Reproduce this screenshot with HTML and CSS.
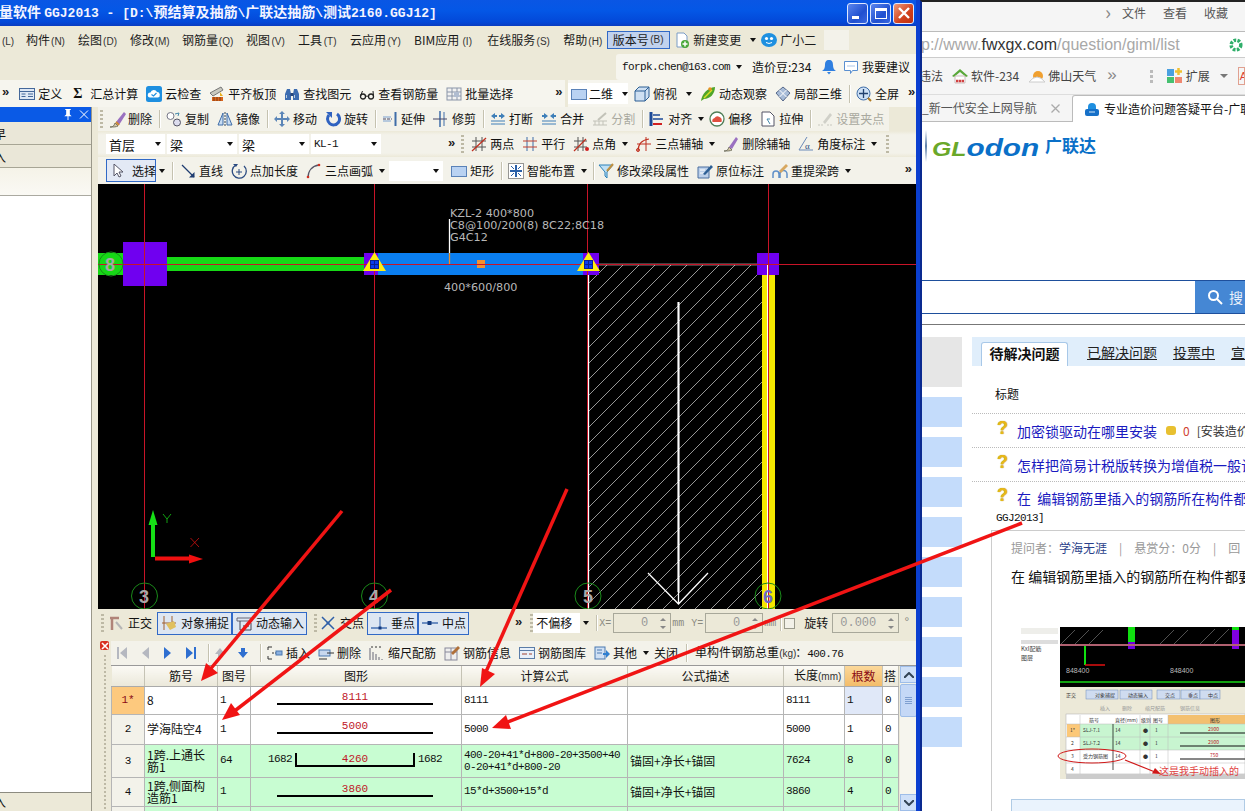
FILE: index.html
```html
<!DOCTYPE html>
<html lang="zh">
<head>
<meta charset="utf-8">
<title>GGJ2013</title>
<link rel="stylesheet" href="styles.css">
</head>
<body>
<div class="desk">
<section class="app">
  <header class="title">
    <h1 class="title-text">量软件 <span class="lat">GGJ2013 - [D:\</span>预结算及抽筋<span class="lat">\</span>广联达抽筋<span class="lat">\</span>测试<span class="lat">2160.GGJ12]</span></h1>
    <div class="win-btns">
      <span class="wb"><i class="wb-min"></i></span>
      <span class="wb"><i class="wb-max"></i></span>
      <span class="wb wb-x"><svg viewBox="0 0 12 12" width="12" height="12"><path d="M1 1l10 10M11 1L1 11" stroke="#fff" stroke-width="2.4"/></svg></span>
    </div>
  </header>

  <nav class="menu">
    <span class="m-item m-first"><span class="k">(L)</span></span>
    <span class="m-item">构件<span class="k">(N)</span></span>
    <span class="m-item">绘图<span class="k">(D)</span></span>
    <span class="m-item">修改<span class="k">(M)</span></span>
    <span class="m-item">钢筋量<span class="k">(Q)</span></span>
    <span class="m-item">视图<span class="k">(V)</span></span>
    <span class="m-item">工具<span class="k">(T)</span></span>
    <span class="m-item">云应用<span class="k">(Y)</span></span>
    <span class="m-item">BIM应用<span class="k">(I)</span></span>
    <span class="m-item">在线服务<span class="k">(S)</span></span>
    <span class="m-item">帮助<span class="k">(H)</span></span>
    <span class="m-ver">版本号<span class="k">(B)</span></span>
    <span class="it m-new"><svg class="i" viewBox="0 0 16 16"><path d="M3 1h7l3 3v11H3z" fill="#fff" stroke="#7a9cc6"/><circle cx="11" cy="12" r="4" fill="#4aa83a"/><path d="M11 9.500v5M8.500 12h5" stroke="#fff" stroke-width="1.500"/></svg>新建变更<i class="dd"></i></span>
    <span class="it m-bot"><svg class="i" viewBox="0 0 16 16"><ellipse cx="8" cy="8" rx="8" ry="7" fill="#1e90e0"/><circle cx="5.500" cy="6.500" r="1.600" fill="#fff"/><circle cx="10.500" cy="6.500" r="1.600" fill="#fff"/><path d="M5 10.500q3 2 6 0" stroke="#fff" fill="none"/></svg>广小二</span>
    <span class="m-blank"></span>
  </nav>

  <div class="infobar">
    <div class="info-strip">
      <span class="mono email">forpk.chen@163.com</span><i class="dd dd-e"></i>
      <span class="bean">造价豆:234</span>
      <svg class="i bell" viewBox="0 0 16 16"><path d="M8 1c3 0 4 2 4 5s1 5 3 6H1c2-1 3-3 3-6s1-5 4-5z" fill="#2f7fe0"/><path d="M6 13h4l-2 2.500z" fill="#2f7fe0"/></svg>
      <span class="it advise"><svg class="i" viewBox="0 0 16 16"><path d="M1.500 2.500h13v9h-5l-2 3v-3h-6z" fill="#fff" stroke="#5a8fd0"/><path d="M4.500 7h7" stroke="#5a8fd0" stroke-dasharray="1 1"/></svg>我要建议</span>
    </div>
  </div>

  <div class="bar3">
    <div class="strip s-left">
      <span class="chev">»</span>
      <span class="it"><svg class="i" viewBox="0 0 16 16"><rect x=".5" y="2.500" width="15" height="11" fill="#dfe8f5" stroke="#45689a"/><path d="M.5 5.500h15M9 8h5M9 10.500h5M2.500 8h4M2.500 10.500h4" stroke="#45689a"/></svg>定义</span>
      <span class="it"><span class="sigma">Σ</span>汇总计算</span>
      <span class="it"><svg class="i" viewBox="0 0 16 16"><rect width="16" height="16" rx="2.500" fill="#1e8fe0"/><path d="M4 11.500a2.500 2.500 0 0 1 .5-5 3.500 3.500 0 0 1 6.500-.5 2.800 2.800 0 0 1 .8 5.500z" fill="#fff"/><path d="M5.500 8.500l2 1.500 3-3" stroke="#1e8fe0" fill="none" stroke-width="1.200"/></svg>云检查</span>
      <span class="it"><svg class="i" viewBox="0 0 16 16"><path d="M1 7L12 1l2 3L4 10z" fill="#c9c9c0" stroke="#777"/><rect x="3" y="11" width="11" height="4" fill="#d9641e"/><path d="M5 11v4M8 11v4M11 11v4" stroke="#7a3a10"/><path d="M11 6l3 4h-3z" fill="#e8b020"/></svg>平齐板顶</span>
      <span class="it"><svg class="i" viewBox="0 0 16 16"><path d="M3 3h3l1 5v6H1V8zM13 3h-3L9 8v6h6V8z" fill="#3c6cb0"/><rect x="6.500" y="7" width="3" height="3" fill="#27467a"/><path d="M2.500 9v3M10.500 9v3" stroke="#bcd"/></svg>查找图元</span>
      <span class="it"><svg class="i" viewBox="0 0 16 16"><circle cx="4" cy="10.500" r="2.500" fill="none" stroke="#222" stroke-width="1.300"/><circle cx="12" cy="10.500" r="2.500" fill="none" stroke="#222" stroke-width="1.300"/><path d="M6.500 10.500q1.500-1 3 0M1.500 10l2-5M14.500 10l-.5-5" fill="none" stroke="#222"/></svg>查看钢筋量</span>
      <span class="it"><svg class="i" viewBox="0 0 16 16"><rect x="1" y="2" width="14" height="12" fill="#f2f2f2" stroke="#8a95a8"/><path d="M1 6h14M1 10h14M6 2v12M11 2v12" stroke="#8a95a8"/><path d="M8 6h5v5H8z" fill="#b0bcd0"/></svg>批量选择</span>
      <span class="chev chev-r">»</span>
    </div>
    <div class="strip s-right">
      <span class="view-combo"><svg class="i" viewBox="0 0 16 16"><rect x=".5" y="3.500" width="15" height="10" fill="#b9d2f2" stroke="#5a82b8"/></svg>二维<i class="dd"></i></span>
      <span class="it"><svg class="i" viewBox="0 0 16 16"><path d="M1 5l4-4h10v10l-4 4H1z" fill="#cfe0f2" stroke="#2d5f94"/><path d="M1 5h10v10M11 5l4-4" fill="none" stroke="#2d5f94"/></svg>俯视<i class="dd"></i></span>
      <span class="it"><svg class="i" viewBox="0 0 16 16"><path d="M1 15C2 8 7 2 15 1c0 7-5 12-11 12z" fill="#4fa52a"/><path d="M4 12L12 4" stroke="#d8e020" stroke-width="1.500"/><circle cx="10" cy="3" r="1.800" fill="#e89020"/></svg>动态观察</span>
      <span class="it"><svg class="i" viewBox="0 0 16 16"><path d="M8 1l7 6-7 8-7-8z" fill="#a8bcd8" stroke="#56688a"/><path d="M4.500 4L11.500 11M11.500 4L4.500 11" stroke="#fff"/></svg>局部三维</span>
      <i class="sep"></i>
      <span class="it"><svg class="i" viewBox="0 0 16 16"><circle cx="7.500" cy="7.500" r="6.500" fill="#cde0f5" stroke="#3f6da8"/><path d="M7.500 3v9M3 7.500h9" stroke="#20406e" stroke-width="1.300"/><path d="M12 12l3 3" stroke="#b07a20" stroke-width="2"/></svg>全屏</span>
      <span class="chev chev-e">»</span>
    </div>
  </div>

  <div class="work">
    <aside class="left">
      <div class="lp-head"><svg class="lp-ic" viewBox="0 0 10 12"><path d="M2 0h6v1H7v5l2 2H1l2-2V1H2zM4.500 8h1v4h-1z" fill="#fff"/></svg><svg class="lp-ic" viewBox="0 0 10 10"><path d="M1 1l8 8M9 1L1 9" stroke="#fff"/></svg></div>
      <div class="lp-tab"><span>早</span></div>
      <div class="lp-tab"><span>入</span></div>
      <div class="lp-grad"></div>
      <div class="lp-list"></div>
      <div class="lp-foot"><span>入</span></div>
    </aside>

    <main class="main">
      <div class="tb tb-a">
        <i class="grip"></i>
        <span class="it"><svg class="i i18" viewBox="0 0 18 18"><path d="M1 17c3 0 4-1 5-4l3 3c-2 1-4 1-8 1z" fill="#d8c8a8" stroke="#776"/><path d="M7 12L15 2l2 2-7 11z" fill="#9a70c0"/><path d="M7 12l3 3" stroke="#c83" stroke-width="2"/></svg>删除</span>
        <i class="sep"></i>
        <span class="it"><svg class="i" viewBox="0 0 16 16"><circle cx="4.500" cy="5" r="3.500" fill="#fff" stroke="#778"/><circle cx="11" cy="11.500" r="3.500" fill="#dde" stroke="#556"/><path d="M9 3l4-1M13 2l-1 3" stroke="#48a" fill="none"/></svg>复制</span>
        <span class="it"><svg class="i" viewBox="0 0 16 16"><path d="M1 14L6 2v12zM15 14L10 2v12z" fill="#c8dcf2" stroke="#3f6da8"/><path d="M8 1v14" stroke="#345" stroke-dasharray="2 1"/></svg>镜像</span>
        <i class="sep"></i>
        <span class="it"><svg class="i" viewBox="0 0 16 16"><path d="M8 0l3 3H9v4h4V5l3 3-3 3V9H9v4h2l-3 3-3-3h2V9H3v2L0 8l3-3v2h4V3H5z" fill="#5c86b8"/></svg>移动</span>
        <span class="it"><svg class="i" viewBox="0 0 16 16"><path d="M12 3a6 6 0 1 1-8 1" fill="none" stroke="#2f62c0" stroke-width="3"/><path d="M1 1h6v6z" fill="#2f62c0"/></svg>旋转</span>
        <i class="sep"></i>
        <span class="it"><svg class="i" viewBox="0 0 16 16"><path d="M1 8h9" stroke="#446" stroke-dasharray="3 1"/><path d="M13.500 1v14" stroke="#3f6da8" stroke-width="2"/><path d="M1 6h8M1 10h8" stroke="#7aa0d0"/></svg>延伸</span>
        <span class="it"><svg class="i" viewBox="0 0 16 16"><path d="M7 0v16" stroke="#3f6da8" stroke-width="1.500"/><path d="M11 1v14" stroke="#3f6da8"/><path d="M0 8h14" stroke="#446"/></svg>修剪</span>
        <i class="sep"></i>
        <span class="it"><svg class="i" viewBox="0 0 16 16"><path d="M1 13h14M1 10h14" stroke="#3f7fb8"/><path d="M1 5l4-3v2h2v2H5v2zM15 5l-4-3v2H9v2h2v2z" fill="#3f7fb8"/></svg>打断</span>
        <span class="it"><svg class="i" viewBox="0 0 16 16"><path d="M1 13h14M1 10h14" stroke="#3f7fb8"/><path d="M7 5L3 2v2H1v2h2v2zM9 5l4-3v2h2v2h-2v2z" fill="#3f7fb8"/></svg>合并</span>
        <span class="it off"><svg class="i" viewBox="0 0 16 16"><path d="M1 10h14M1 14h14M3 10v4M7 10v4M11 10v4" stroke="#c2c2b8"/><path d="M6 9l8-7" stroke="#c2c2b8" stroke-width="2"/></svg>分割</span>
        <i class="sep"></i>
        <span class="it"><svg class="i" viewBox="0 0 16 16"><path d="M2 1v14" stroke="#1c4a98" stroke-width="3"/><path d="M4 4h7M4 8h10" stroke="#1c4a98" stroke-width="1.500"/><path d="M4 13h9" stroke="#d02020" stroke-width="2"/></svg>对齐<i class="dd"></i></span>
        <span class="it"><svg class="i" viewBox="0 0 16 16"><circle cx="8" cy="8" r="7" fill="#fff" stroke="#4f7e56" stroke-width="1.300"/><path d="M3.500 11q-1-3 2-4 2-3 5-1 3 1 2 5z" fill="#e05040"/></svg>偏移</span>
        <span class="it"><svg class="i" viewBox="0 0 16 16"><path d="M2 1h8l4 4v10H2z" fill="#fff" stroke="#556"/><path d="M7 8l3 5M10 8H7" stroke="#48a" fill="none"/></svg>拉伸</span>
        <i class="sep"></i>
        <span class="it off"><svg class="i" viewBox="0 0 16 16"><path d="M1 14h6M10 14h5" stroke="#c8c8bf" stroke-dasharray="2 1"/><path d="M6 11l7-9 2 2-7 9z" fill="#d0d0c8"/></svg>设置夹点</span>
      </div>

      <div class="tb tb-b">
        <span class="combo c-first">首层<i class="dd"></i></span>
        <span class="combo">梁<i class="dd"></i></span>
        <span class="combo">梁<i class="dd"></i></span>
        <span class="combo"><span class="mono">KL-1</span><i class="dd"></i></span>
        <span class="chev chev-b">»</span>
        <i class="grip"></i>
        <span class="it"><svg class="i" viewBox="0 0 16 16"><path d="M5 1v14M11 1v14M1 5h14M1 11h14" stroke="#555"/><path d="M1 15L15 2" stroke="#c03020" stroke-width="1.300"/></svg>两点</span>
        <span class="it"><svg class="i" viewBox="0 0 16 16"><path d="M5 1v14M11 1v14" stroke="#3f6da8"/><path d="M1 5h14M1 11h14" stroke="#c04030"/></svg>平行</span>
        <span class="it"><svg class="i" viewBox="0 0 16 16"><path d="M5 1v14M10 1v14M1 5h13M1 11h13" stroke="#555"/><path d="M1 15L13 3" stroke="#c03020" stroke-width="1.300"/><circle cx="14" cy="13" r="2" fill="#d02020"/></svg>点角<i class="dd"></i></span>
        <span class="it"><svg class="i" viewBox="0 0 16 16"><path d="M2 15C2 8 6 4 13 3" fill="none" stroke="#c03020" stroke-width="1.200"/><path d="M10 1v14M1 8h14" stroke="#c03020"/><circle cx="2" cy="14" r="1.500" fill="none" stroke="#c03020"/></svg>三点辅轴<i class="dd"></i></span>
        <span class="it"><svg class="i" viewBox="0 0 16 16"><path d="M1 15c3 0 4-1 5-4l3 3c-2 1-4 1-8 1z" fill="#d8c8a8" stroke="#776"/><path d="M6 11L13 1l2 2-6 10z" fill="#9a70c0"/></svg>删除辅轴</span>
        <span class="it"><svg class="i" viewBox="0 0 16 16"><path d="M1 14L9 1M1 14h14" stroke="#6a8ab8" fill="none"/><text class="alpha" x="7" y="13">α</text></svg>角度标注<i class="dd"></i></span>
        <i class="grip grip-e"></i>
      </div>

      <div class="tb tb-c">
        <span class="btn btn-sel"><svg class="i i10" viewBox="0 0 10 14"><path d="M1 0v12l3-3 2 4 2-1-2-4h4z" fill="#fff" stroke="#556"/></svg>选择</span><i class="dd dd-s"></i>
        <i class="sep s-c"></i>
        <span class="it"><svg class="i" viewBox="0 0 16 16"><path d="M2 2l12 12" stroke="#1e3c70" stroke-width="1.300"/><path d="M14.500 14.500V9L9 14.500z" fill="#1e3c70"/></svg>直线</span>
        <span class="it"><svg class="i" viewBox="0 0 16 16"><path d="M5 2a7 7 0 1 0 8 1" fill="none" stroke="#2a4a80" stroke-width="1.300"/><path d="M8 6v6M5 9h6" stroke="#2a4a80"/><path d="M2 1l5 0-2 3z" fill="#2a4a80"/></svg>点加长度</span>
        <span class="it"><svg class="i" viewBox="0 0 16 16"><path d="M2 15C2 8 6 3 13 2" fill="none" stroke="#556" stroke-width="1.300"/><circle cx="2" cy="14" r="1.300" fill="#d03020"/><circle cx="13" cy="2" r="1.300" fill="#d03020"/></svg>三点画弧<i class="dd"></i></span>
        <span class="combo c-blank"><i class="dd"></i></span>
        <span class="it"><svg class="i" viewBox="0 0 16 16"><rect x=".5" y="3.500" width="15" height="10" fill="#b9d2f2" stroke="#5a82b8"/></svg>矩形</span>
        <i class="sep"></i>
        <span class="it"><svg class="i" viewBox="0 0 16 16"><rect x=".5" y=".5" width="15" height="15" fill="#fff" stroke="#333" stroke-dasharray="1 1"/><path d="M8 2v12M2 8h12" stroke="#2a60a8" stroke-width="2"/><path d="M3 3l3 3M13 3l-3 3M3 13l3-3M13 13l-3-3" stroke="#2a60a8"/></svg>智能布置<i class="dd"></i></span>
        <i class="sep s-c2"></i>
        <span class="it"><svg class="i" viewBox="0 0 16 16"><path d="M1 2h14L9 9v6L7 13V9z" fill="#bfe0f5" stroke="#2a80b8"/><path d="M9 8l6-7" stroke="#c09040" stroke-width="2"/></svg>修改梁段属性</span>
        <span class="it"><svg class="i" viewBox="0 0 16 16"><path d="M1 4h11v11H1z" fill="#bcd0ea" stroke="#4a6ea0"/><path d="M3 7h5M3 10h5" stroke="#fff"/><path d="M6 11L14 2l2 2-8 8z" fill="#2d5f94"/></svg>原位标注</span>
        <span class="it"><svg class="i" viewBox="0 0 16 16"><path d="M1 15v-4a3 3 0 0 1 6 0v4M8 15v-4a3 3 0 0 1 7 0v4" fill="none" stroke="#6090c8" stroke-width="1.500"/><path d="M7 8l7-7 2 2-7 7z" fill="#d8a860"/></svg>重提梁跨<i class="dd"></i></span>
        <span class="chev chev-c">»</span>
      </div>

      <svg class="cad" viewBox="98 184 818 425" width="818" height="425">
        <defs>
          <pattern id="hatch" patternUnits="userSpaceOnUse" width="16" height="16" x="590" y="266"><path d="M-1 17L17-1" stroke="#d5d5d5" stroke-width=".7"/></pattern>
        </defs>
        <rect x="98" y="184" width="818" height="425" fill="#000"/>
        <rect x="589" y="265" width="173" height="344" fill="url(#hatch)"/>
        <path d="M588.500 609V264.500H762" stroke="#fff" fill="none" stroke-width="1.300"/>
        <path d="M678.500 302v302M648 573l30.500 31L708 573" stroke="#fff" fill="none" stroke-width="1.300"/>
        <path d="M678.500 302v290" stroke="#fff" stroke-width="2"/>
        <rect x="98" y="253" width="25" height="22" fill="#16d816"/>
        <rect x="167" y="257" width="198" height="14" fill="#16d816"/>
        <rect x="123" y="242" width="44" height="44" fill="#7000f0"/>
        <rect x="364" y="253" width="15" height="22" fill="#7000f0"/>
        <rect x="378" y="253" width="205" height="22" fill="#0a7ef0"/>
        <rect x="583" y="253" width="16" height="22" fill="#7000f0"/>
        <rect x="762" y="275" width="13" height="334" fill="#f4e800"/>
        <rect x="757" y="253" width="22" height="22" fill="#7000f0"/>
        <path d="M767.500 264v345" stroke="#fff" stroke-width="1"/>
        <rect x="477" y="260" width="8" height="8" fill="#f09030"/>
        <path d="M449.500 219v34" stroke="#fff" stroke-width="1.300"/>
        <path d="M449.500 253v11" stroke="#e89030" stroke-width="1.300"/>
        <g stroke="#c81428" fill="none">
          <path d="M144.500 184v425M374.500 184v425M587.500 184v425M768.500 184v425M98 264.500h818"/>
        </g>
        <path d="M374.500 252l11.500 19h-23z" fill="#ffee10"/>
        <path d="M588.500 252l11.500 19h-23z" fill="#ffee10"/>
        <g fill="#0a3cf0" stroke="#0a2090">
          <rect x="370.500" y="260.500" width="8" height="8"/>
          <rect x="584.500" y="260.500" width="8" height="8"/>
        </g>
        <path d="M374.500 260v9M370 264.500h9M588.500 260v9M584 264.500h9" stroke="#0a2090"/>
        <g fill="none" stroke="#1a8a1a">
          <circle cx="111" cy="264" r="12"/><circle cx="144.500" cy="596" r="13"/><circle cx="374.500" cy="596" r="13"/><circle cx="588" cy="596" r="13"/><circle cx="768" cy="596" r="13"/>
        </g>
        <g class="axis-no">
          <text x="105" y="271">8</text><text x="139" y="603">3</text><text x="369" y="603">4</text><text x="583" y="603">5</text>
          <text class="axis-six" x="763" y="603">6</text>
        </g>
        <g class="cad-note">
          <text x="450" y="217">KZL-2 400*800</text>
          <text x="450" y="229">C8@100/200(8) 8C22;8C18</text>
          <text x="450" y="241">G4C12</text>
          <text x="444" y="291">400*600/800</text>
        </g>
        <path d="M153 557v-33" stroke="#16e016" stroke-width="4"/>
        <path d="M153 510l-4.500 15h9z" fill="#16e016"/>
        <path d="M155 558.500h36" stroke="#f01010" stroke-width="4"/>
        <path d="M203 559l-14-4.500v9z" fill="#f01010"/>
        <path d="M163 514l4 5 4-5M167 519v4" stroke="#16c816" fill="none" stroke-width=".8"/>
        <path d="M190.500 538l8.500 9M199 538l-8.500 9" stroke="#d01010" fill="none" stroke-width=".8"/>
      </svg>

      <div class="tb tb-snap">
        <i class="grip"></i>
        <span class="it"><svg class="i" viewBox="0 0 16 16"><path d="M1 3h9M3 3v12" stroke="#b08478" stroke-width="2.500" fill="none"/><path d="M7 7l6 7" stroke="#b5b5b5" stroke-width="2"/></svg>正交</span>
        <span class="btn btn-on"><svg class="i" viewBox="0 0 16 16"><path d="M3 1v14M1 8h14" stroke="#a06030"/><path d="M5 9l8-3 2 6-6 3z" fill="#e0c060"/><path d="M11 1v6" stroke="#a06030"/></svg>对象捕捉</span>
        <span class="btn btn-on btn-next"><svg class="i" viewBox="0 0 16 16"><path d="M1 3h14v3H1z" fill="none" stroke="#667"/><path d="M4 6v9h11V8" fill="none" stroke="#445"/><path d="M7 11h6" stroke="#333"/></svg>动态输入</span>
        <i class="grip grip-m"></i>
        <span class="it it-cross"><svg class="i" viewBox="0 0 16 16"><path d="M2 2l12 12M14 2L2 14" stroke="#2f5fa8" stroke-width="1.500"/><circle cx="8" cy="8" r="1.500" fill="#2f5fa8"/></svg>交点</span>
        <span class="btn btn-on btn-pt"><svg class="i" viewBox="0 0 16 16"><path d="M0 13h16" stroke="#2f5fa8" stroke-width="1.300"/><path d="M9 2v11" stroke="#2f5fa8"/><rect x="7.500" y="11.500" width="3" height="3" fill="#123a80"/></svg>垂点</span>
        <span class="btn btn-on btn-pt btn-mid"><svg class="i" viewBox="0 0 16 16"><path d="M0 8h16" stroke="#2f5fa8" stroke-width="1.300"/><rect x="5.500" y="6" width="4" height="4" fill="#123a80"/></svg>中点</span>
        <span class="chev chev-s">»</span>
        <i class="grip grip-n"></i>
        <span class="combo c-offset">不偏移<i class="dd"></i></span>
        <i class="sep s-n1"></i>
        <span class="lab">X=</span><span class="spin"><span class="spin-v">0</span><span class="spin-a"><i class="up"></i><i class="dn"></i></span></span><span class="lab mm">mm</span>
        <span class="lab lab-y">Y=</span><span class="spin"><span class="spin-v">0</span><span class="spin-a"><i class="up"></i><i class="dn"></i></span></span><span class="lab mm">mm</span>
        <i class="sep s-n2"></i>
        <span class="check"></span>
        <span class="rot">旋转</span>
        <span class="spin spin-w"><span class="spin-v">0.000</span><span class="spin-a"><i class="up"></i><i class="dn"></i></span></span><span class="lab deg">°</span>
      </div>

      <div class="bottom">
        <div class="gutter">
          <span class="redx"><svg viewBox="0 0 8 8" width="8" height="8"><path d="M1 1l6 6M7 1L1 7" stroke="#fff" stroke-width="1.600"/></svg></span>
          <i class="gutter-grip"></i>
        </div>
        <div class="grid-area">
          <div class="tb tb-nav">
            <svg class="nv nv-off" viewBox="0 0 10 12"><path d="M0 0h2v12H0zM10 0v12L3 6z"/></svg>
            <svg class="nv nv-off" viewBox="0 0 10 12"><path d="M9 0v12L2 6z"/></svg>
            <svg class="nv" viewBox="0 0 10 12"><path d="M1 0v12l7-6z"/></svg>
            <svg class="nv" viewBox="0 0 10 12"><path d="M0 0v12l7-6zM8 0h2v12H8z"/></svg>
            <i class="sep s-nv"></i>
            <svg class="nv nv-off" viewBox="0 0 10 12"><path d="M5 1l5 6H7v4H3V7H0z"/></svg>
            <svg class="nv" viewBox="0 0 10 12"><path d="M5 11l5-6H7V1H3v4H0z"/></svg>
            <i class="sep s-nv"></i>
            <span class="it"><svg class="i" viewBox="0 0 16 16"><path d="M5 2H1v3M5 14H1v-3" stroke="#333" fill="none"/><path d="M5 8h9" stroke="#333" stroke-dasharray="2 1"/><rect x="9" y="6" width="6" height="4" fill="#8ab0e0" stroke="#4a78b0"/></svg>插入</span>
            <span class="it"><svg class="i" viewBox="0 0 16 16"><rect x="1" y="5" width="11" height="6" fill="#c8d8ee" stroke="#4a78b0"/><path d="M9 8h7M1 14h8" stroke="#333"/></svg>删除</span>
            <span class="it"><svg class="i" viewBox="0 0 16 16"><path d="M1 15V3M4 15V7M7 15V9M10 15v-3M13 15v-1" stroke="#667"/><path d="M2 2h12" stroke="#333" stroke-dasharray="2 2"/></svg>缩尺配筋</span>
            <span class="it"><svg class="i" viewBox="0 0 16 16"><rect x="1" y="3" width="12" height="12" fill="#eee" stroke="#889"/><path d="M1 7h12M7 3v12" stroke="#889"/><path d="M7 8l7-7 2 2-7 7z" fill="#b07038"/></svg>钢筋信息</span>
            <span class="it"><svg class="i" viewBox="0 0 16 16"><rect x=".5" y="2.500" width="15" height="11" fill="#e8f0fa" stroke="#5a7ca8"/><path d="M.5 5.500h15" stroke="#5a7ca8"/><path d="M3 9h5M10 9h3" stroke="#a04030"/></svg>钢筋图库</span>
            <span class="it"><svg class="i" viewBox="0 0 16 16"><rect x="1" y="2" width="10" height="12" fill="#cfe0f4" stroke="#4a78b0"/><path d="M3 5h5M3 8h5" stroke="#4a78b0"/><path d="M9 8h3V5l4 4-4 4v-3H9z" fill="#2f7fd0"/></svg>其他<i class="dd"></i></span>
            <span class="plain p-close">关闭</span>
            <i class="sep s-close"></i>
            <span class="plain total">单构件钢筋总重<span class="k">(kg)</span>：<span class="mono">400.76</span></span>
          </div>
          <div class="grid-wrap">
            <table class="grid">
              <colgroup><col class="c0"><col class="c1"><col class="c2"><col class="c3"><col class="c4"><col class="c5"><col class="c6"><col class="c7"><col class="c8"></colgroup>
              <thead>
                <tr><th></th><th>筋号</th><th>图号</th><th>图形</th><th>计算公式</th><th>公式描述</th><th>长度<span class="k">(mm)</span></th><th class="hot">根数</th><th class="cut">搭</th></tr>
              </thead>
              <tbody>
                <tr class="r1"><td class="no cur">1*</td><td>8</td><td class="bl mono">1</td><td><div class="shp"><span>8111</span></div></td><td class="mono">8111</td><td></td><td class="mono">8111</td><td class="mono focus">1</td><td class="mono">0</td></tr>
                <tr class="r2"><td class="no">2</td><td>学海陆空4</td><td class="bl mono">1</td><td><div class="shp"><span>5000</span></div></td><td class="mono">5000</td><td></td><td class="mono">5000</td><td class="mono">1</td><td class="mono">0</td></tr>
                <tr class="g r3"><td class="no">3</td><td class="tight">1跨.上通长筋1</td><td class="bl mono">64</td><td><div class="ushp"><span class="u-side mono">1682</span><div class="u"><span>4260</span></div><span class="u-side mono">1682</span></div></td><td class="mono f2">400-20+41*d+800-20+3500+40<br>0-20+41*d+800-20</td><td>锚固+净长+锚固</td><td class="mono">7624</td><td class="mono">8</td><td class="mono">0</td></tr>
                <tr class="g r4"><td class="no">4</td><td class="tight">1跨.侧面构造筋1</td><td class="bl mono">1</td><td><div class="shp"><span>3860</span></div></td><td class="mono">15*d+3500+15*d</td><td>锚固+净长+锚固</td><td class="mono">3860</td><td class="mono">4</td><td class="mono">0</td></tr>
                <tr class="g r5"><td class="no"></td><td></td><td class="bl"></td><td></td><td></td><td></td><td></td><td></td><td></td></tr>
              </tbody>
            </table>
            <div class="vscroll">
              <span class="sb-btn"><svg viewBox="0 0 10 6" width="10" height="6"><path d="M0 6l5-5 5 5" fill="none" stroke="#345" stroke-width="2"/></svg></span>
              <span class="sb-thumb"><i></i></span>
              <span class="sb-track"></span>
              <span class="sb-btn"><svg viewBox="0 0 10 6" width="10" height="6"><path d="M0 0l5 5 5-5" fill="none" stroke="#345" stroke-width="2"/></svg></span>
            </div>
          </div>
        </div>
      </div>
    </main>
  </div>
</section>

<section class="web">
  <div class="w-menu"><span class="w-gt">›</span><span>文件</span><span>查看</span><span>收藏</span></div>
  <div class="w-addr"><span class="url">p://www.<b>fwxgx.com</b>/question/giml/list</span><svg class="w-ok" viewBox="0 0 16 16"><circle cx="8" cy="8" r="5.500" fill="none" stroke="#2fae6a" stroke-width="4" stroke-dasharray="3 1.500"/></svg></div>
  <div class="w-fav">
    <span class="f-first">违法</span>
    <span class="f-i f-soft"><svg class="i" viewBox="0 0 16 16"><path d="M0 8l8-7 8 7-2 1-6-5-6 5z" fill="#5aa83a"/><path d="M3 8h10v7H3z" fill="#fff" stroke="#cbb"/><path d="M4 13h8" stroke="#d04040" stroke-width="2.500" stroke-dasharray="2.500 .5"/></svg>软件-234</span>
    <span class="f-i"><svg class="i" viewBox="0 0 16 16"><circle cx="9" cy="8" r="5" fill="#f0a030"/><path d="M0 14q8-10 16 0z" fill="#fff" stroke="#ccc"/></svg>佛山天气</span>
    <span class="f-more">»</span>
    <i class="f-grip"></i>
    <span class="f-i f-ext"><svg class="i" viewBox="0 0 16 16"><rect x="0" y="1" width="7" height="7" fill="#4aa0e0"/><rect x="0" y="9" width="7" height="6" fill="#46c070"/><rect x="8" y="9" width="7" height="6" fill="#f08870"/><path d="M11.500 0v7M8 3.500h7" stroke="#f0c030" stroke-width="2.500"/></svg>扩展</span>
    <i class="dd dd-g"></i>
    <span class="f-ad">Ac</span>
  </div>
  <div class="w-tabs">
    <span class="w-tab">_新一代安全上网导航<svg class="w-x" viewBox="0 0 9 9"><path d="M.5.500l8 8M8.500.500l-8 8" stroke="#aaa" stroke-width="1.300"/></svg></span>
    <span class="w-tab w-active"><svg class="i" viewBox="0 0 16 16"><path d="M4 6a4 4 0 0 1 8 0v2H4z" fill="#1f8fe0"/><rect x="1" y="8" width="14" height="7" rx="2" fill="#1670c8"/><path d="M5 11h6" stroke="#cfe6fa"/></svg>专业造价问题答疑平台-广联达</span>
  </div>
  <div class="w-page">
    <div class="logo"><i class="logo-bar"></i><span class="logo-w"><span class="logo-g">GL</span><span class="logo-o">odon</span></span><span class="logo-cn">广联达</span></div>
    <div class="search"><span class="search-btn"><svg viewBox="0 0 16 16" width="16" height="16"><circle cx="6.500" cy="6.500" r="4.500" fill="none" stroke="#fff" stroke-width="2"/><path d="M10 10l5 5" stroke="#fff" stroke-width="2"/></svg>搜</span></div>
    <hr class="rule">
    <div class="cols">
      <div class="side">
        <i class="s-gray"></i><i class="s-bl"></i><i class="s-bl"></i><i class="s-bl"></i><i class="s-bl"></i><i class="s-bl"></i><i class="s-bl"></i><i class="s-bl"></i><i class="s-bl"></i><i class="s-bl"></i>
      </div>
      <div class="qa">
        <div class="qa-tabs"><span class="qa-on">待解决问题</span><a class="q1">已解决问题</a><a>投票中</a><a>宣</a></div>
        <div class="qa-th">标题</div>
        <div class="q-row"><span class="qm">?</span><a>加密锁驱动在哪里安装</a><i class="coin"></i><span class="zero">0</span><span class="cat">[安装造价</span></div>
        <div class="q-row"><span class="qm">?</span><a>怎样把简易计税版转换为增值税一般计税</a></div>
        <div class="q-row q-last"><span class="qm">?</span><a>在&nbsp;&nbsp;编辑钢筋里插入的钢筋所在构件都要</a></div>
        <div class="q-tag mono">GGJ2013]</div>
        <div class="detail">
          <div class="asker">提问者：<b>学海无涯</b><span class="bar">|</span>悬赏分：0分<span class="bar">|</span>回</div>
          <div class="body-txt">在 编辑钢筋里插入的钢筋所在构件都要</div>
          <svg class="shot" viewBox="1020 628 225 152" width="225" height="152">
            <rect x="1020" y="628" width="225" height="152" fill="#fff"/>
            <rect x="1021" y="629" width="37" height="6" fill="#eeeeea"/><rect x="1021" y="641" width="37" height="4" fill="#ddd"/>
            <text class="sh-t" x="1021" y="652">KxI配筋</text><text class="sh-t" x="1021" y="661">图层</text>
            <rect x="1060" y="628" width="185" height="60" fill="#000"/>
            <path d="M1061 645l14-14M1075 645l14-14M1089 645l14-14M1160 645l14-14M1174 645l14-14M1200 645l15-15M1214 645l15-15" stroke="#888" stroke-width=".6"/>
            <rect x="1128" y="628" width="7" height="15" fill="#10e010"/><rect x="1128" y="643" width="7" height="7" fill="#7000e0"/>
            <rect x="1232" y="628" width="7" height="3" fill="#10e010"/><rect x="1232" y="631" width="7" height="19" fill="#8000e0"/>
            <rect x="1060" y="645" width="185" height="2" fill="#b06070"/>
            <rect x="1084" y="647" width="2" height="19" fill="#10e010"/><path d="M1085 666h20" stroke="#e01010" stroke-width="1.500"/>
            <rect x="1060" y="682" width="185" height="2" fill="#10a010"/>
            <text class="sh-w" x="1066" y="674">848400</text><text class="sh-w" x="1170" y="674">848400</text>
            <rect x="1060" y="688" width="185" height="92" fill="#ece9d8"/>
            <g fill="#cfdcf0" stroke="#6b8bb8" stroke-width=".5">
              <rect x="1086" y="691" width="32" height="9"/><rect x="1120" y="691" width="32" height="9"/><rect x="1157" y="691" width="23" height="9"/><rect x="1181" y="691" width="19" height="9"/><rect x="1200" y="691" width="20" height="9"/>
            </g>
            <text class="sh-k" x="1066" y="698">正交</text><text class="sh-k" x="1095" y="698">对象捕捉</text><text class="sh-k" x="1128" y="698">动态输入</text><text class="sh-k" x="1165" y="698">交点</text><text class="sh-k" x="1188" y="698">垂点</text><text class="sh-k" x="1208" y="698">中点</text>
            <text class="sh-g" x="1100" y="711">插入</text><text class="sh-g" x="1122" y="711">删除</text><text class="sh-g" x="1145" y="711">缩尺配筋</text><text class="sh-g" x="1180" y="711">钢筋信息</text>
            <rect x="1066" y="715" width="179" height="60" fill="#fff" stroke="#aaa" stroke-width=".5"/>
            <rect x="1168" y="716" width="77" height="9" fill="#f3c070"/>
            <rect x="1080" y="725" width="165" height="26" fill="#c8f5d0"/>
            <rect x="1067" y="725" width="13" height="13" fill="#fcc878"/>
            <path d="M1066 725h179M1066 738h179M1066 751h179M1066 764h179M1080 716v59M1140 716v59M1150 716v59M1168 716v59" stroke="#bbb" stroke-width=".5"/>
            <path d="M1113 725v46" stroke="#000" stroke-width=".7"/>
            <text class="sh-k" x="1089" y="723">筋号</text><text class="sh-k" x="1115" y="723">直径(mm)</text><text class="sh-k" x="1141" y="723">级别</text><text class="sh-k" x="1153" y="723">图号</text><text class="sh-k" x="1210" y="723">图形</text>
            <text class="sh-k" x="1070" y="733">1*</text><text class="sh-k" x="1071" y="746">2</text><text class="sh-k" x="1071" y="759">3</text><text class="sh-k" x="1071" y="772">4</text>
            <text class="sh-k" x="1083" y="733">SLJ-7.1</text><text class="sh-k" x="1083" y="746">SLJ-7.2</text><text class="sh-k" x="1083" y="759">受力钢筋图</text>
            <text class="sh-k" x="1115" y="733">14</text><text class="sh-k" x="1115" y="746">14</text><text class="sh-k" x="1115" y="759">14</text>
            <text class="sh-k" x="1143" y="733">●</text><text class="sh-k" x="1143" y="746">●</text><text class="sh-k" x="1143" y="759">●</text>
            <text class="sh-k" x="1155" y="733">1</text><text class="sh-k" x="1155" y="746">1</text><text class="sh-k" x="1155" y="759">1</text>
            <text class="sh-p" x="1208" y="732">2900</text><text class="sh-p" x="1208" y="745">2900</text><text class="sh-p" x="1210" y="758">750</text>
            <path d="M1180 734h65M1180 747h65M1180 760h65" stroke="#111"/>
            <ellipse cx="1092" cy="757" rx="34" ry="7" fill="none" stroke="#d01818"/>
            <rect x="1066" y="775" width="179" height="5" fill="#ccc"/>
            <path d="M1125 761l30 12" stroke="#d01818" stroke-width="1.200"/><path d="M1161 775l-9-.5 3-5.500z" fill="#d01818"/>
            <text class="sh-r" x="1159" y="776">这是我手动插入的</text>
          </svg>
          <div class="reply-box"></div>
        </div>
      </div>
    </div>
  </div>
</section>

<svg class="arrows" viewBox="0 0 1245 811" width="1245" height="811">
  <g stroke="#f01414" stroke-width="3.500" fill="none">
    <path d="M342 511L208 672"/><path d="M391 590L232 713"/><path d="M567 489L485 674"/><path d="M1022 523L505 723"/>
  </g>
  <g fill="#f01414">
    <path d="M201 681l5-18 12 10z"/><path d="M222 720l9-17 9 12z"/><path d="M480 687l2-19 13 6z"/><path d="M492 728l14-13 5 14z"/>
  </g>
</svg>
</div>
</body>
</html>
```

FILE: styles.css
```css
* { box-sizing: border-box; }
html, body { margin: 0; padding: 0; }
body { font: 12px/1 "Noto Sans CJK SC", "Liberation Sans", sans-serif; color: #111; background: #000; overflow: hidden; }
.desk { position: relative; width: 1245px; height: 811px; display: flex; overflow: hidden; }
i { font-style: normal; display: block; }
.mono { font-family: "Liberation Mono", "Noto Sans CJK SC", monospace; font-size: 11px; letter-spacing: -.6px; }
.k { font-family: "Liberation Sans", sans-serif; font-size: 10px; display: inline-block; width: 16px; text-align: center; color: #333; }

/* Application window */
.app { width: 920px; height: 811px; display: flex; flex-direction: column; background: #ece9d8; border-right: 4px solid #0b3fd0; flex: none; }
.title { height: 26px; flex: none; display: flex; align-items: center; background: linear-gradient(#0a56e4 0, #0457e6 40%, #0348d8 85%, #0a3cc0 100%); color: #fff; overflow: hidden; }
.title-text { margin: 0 0 2px -1px; font: bold 14px/1 "Noto Sans CJK SC", sans-serif; white-space: pre; color: #f4f4ff; flex: 1; }
.lat { font: bold 13px/1 "Liberation Mono", monospace; }
.win-btns { display: flex; gap: 2px; margin: 0 2px 0 0; }
.wb { width: 21px; height: 21px; border: 1px solid #dfe8ff; border-radius: 3px; background: linear-gradient(135deg, #5b86ee, #2050d0 60%, #3a68e0); display: flex; align-items: center; justify-content: center; position: relative; }
.wb-x { background: linear-gradient(135deg, #ef9a7a, #d0401c 60%, #c03010); }
.wb-min { width: 7px; height: 3px; background: #fff; margin-top: 9px; margin-right: 4px; }
.wb-max { width: 12px; height: 11px; border: 1px solid #fff; border-top-width: 3px; }

.menu { height: 28px; flex: none; display: flex; align-items: center; color: #1a1a1a; }
.m-item { margin-right: 12px; white-space: nowrap; }
.m-first { margin-right: 10px; }
.m-ver { width: 63px; height: 18px; background: #c1d2ee; border: 1px solid #3169c6; display: flex; align-items: center; justify-content: center; margin-left: -8px; }
.m-new { margin-left: 4px; }
.m-bot { margin-left: 5px; gap: 3px; }
.m-blank { width: 25px; height: 20px; background: #f3f2ea; margin-left: 8px; }

.infobar { height: 26px; flex: none; display: flex; justify-content: flex-end; padding-right: 0; }
.info-strip { width: 300px; display: flex; align-items: center; background: #f6f5ee; padding-left: 6px; border-radius: 3px 0 0 3px; }
.email { width: 108px; font-size: 11px; letter-spacing: -.6px; }
.dd-e { margin: 0 10px 0 4px; }
.bean { width: 60px; font-size: 12px; }
.bell { margin-left: 9px; }
.advise { margin-left: 6px; gap: 4px; }

.it { display: inline-flex; align-items: center; gap: 3px; white-space: nowrap; flex: none; }
.i { width: 16px; height: 16px; flex: none; display: block; }
.i18 { width: 18px; height: 18px; margin-right: -2px; }
.i10 { width: 10px; height: 14px; margin: 0 6px 0 0; }
.off { color: #a9a99f; }
.dd { width: 0; height: 0; border: 3px solid transparent; border-top: 4px solid #111; border-bottom: 0; margin-left: 6px; flex: none; }
.sep { width: 1px; height: 18px; background: #c5c2b0; box-shadow: 1px 0 0 #fff; margin: 0 -2px 0 -1px; flex: none; }
.grip { width: 3px; height: 18px; flex: none; background: repeating-linear-gradient(#bdb9a5 0 2px, transparent 2px 4px); }
.chev { font: bold 13px/1 "Liberation Sans", sans-serif; color: #222; flex: none; margin-top: -4px; }

.bar3 { height: 27px; flex: none; display: flex; }
.strip { display: flex; align-items: center; gap: 8px; background: #f6f5ee; }
.s-left { width: 565px; padding-left: 2px; }
.s-left .chev:first-child { margin-right: 2px; }
.sigma { font: bold 14px/1 "Liberation Serif", serif; width: 15px; text-align: center; margin-right: 2px; }
.chev-r { margin-left: 34px; }
.s-right { width: 348px; margin-left: 3px; }
.view-combo { width: 60px; height: 21px; background: #fff; display: flex; align-items: center; gap: 2px; padding-left: 3px; white-space: nowrap; flex: none; }
.view-combo .dd { margin-left: 7px; }
.s-right .it:nth-child(2) { margin-left: -2px; }
.chev-e { margin-left: 1px; }

.work { flex: 1; min-height: 0; display: flex; }
.left { width: 92px; display: flex; flex-direction: column; flex: none; border-right: 1px solid #9a988a; }
.lp-head { height: 15px; background: #0a5ae6; display: flex; align-items: center; justify-content: flex-end; gap: 6px; padding-right: 2px; flex: none; }
.lp-ic { width: 10px; height: 11px; }
.lp-tab { height: 22px; margin-top: 1px; background: #eae7d8; border-bottom: 1px solid #a7a595; display: flex; align-items: center; overflow: hidden; flex: none; }
.lp-tab span { margin-left: -6px; }
.lp-grad { height: 27px; background: linear-gradient(#f5f3e8, #faf9f4); flex: none; }
.lp-list { flex: 1; background: #fff; border-top: 1px solid #aaa9a0; border-bottom: 1px solid #8c8b80; }
.lp-foot { height: 18px; display: flex; align-items: center; background: #ece9d8; flex: none; overflow: hidden; }
.lp-foot span { margin-left: -6px; }

.main { width: 818px; margin-left: 6px; display: flex; flex-direction: column; flex: none; min-height: 0; }
.tb { display: flex; align-items: center; gap: 8px; flex: none; }
.tb-a { height: 24px; width: 791px; padding-left: 2px; background: #f3f2ea; }
.tb-a .grip { margin-right: -2px; }
.tb-a .it:nth-child(2) { gap: 3px; }
.tb-a .dd { margin: 0 -3px 0 3px; }
.tb-b { height: 26px; padding-left: 8px; gap: 2px; background: linear-gradient(#ece9d8 0, #f3f2ea 15%, #f3f2ea 85%, #ece9d8 100%); }
.tb-b .it .dd { margin-left: 3px; }
.combo { width: 70px; height: 20px; background: #fff; position: relative; display: flex; align-items: center; padding-left: 3px; flex: none; font-size: 13px; }
.combo .dd { position: absolute; right: 4px; top: 8px; margin: 0; }
.c-first { width: 59px; }
.chev-b { margin-left: 65px; margin-right: 4px; }
.tb-b .it { margin-left: 6px; }
.tb-b .grip + .it { margin-left: 5px; }
.grip-e { margin-left: 7px; }
.tb-c { height: 27px; padding: 0 4px 0 8px; background: #f3f2ea; }
.tb-c .it .dd { margin-left: 3px; }
.btn { display: inline-flex; align-items: center; gap: 3px; white-space: nowrap; flex: none; border: 1px solid #3169c6; background: #e3e9f5; }
.btn-sel { width: 50px; height: 23px; padding-left: 6px; }
.tb-c .dd-s { margin-left: -5px; }
.s-c { margin: 0 -1px 0 -1px; }
.s-c2 { margin: 0 -4px 0 -2px; }
.c-blank { width: 54px; height: 20px; margin-left: -4px; }
.chev-c { margin-left: auto; }
.cad { display: block; flex: none; }
.axis-no text { font: bold 18px "Liberation Sans", sans-serif; fill: #a8a8a8; }
.axis-no .axis-six { fill: #6a6ac8; }
.cad-note text { font: 11.2px "DejaVu Sans", sans-serif; fill: #b8b8b8; }

.tb-snap { height: 28px; padding-left: 3px; gap: 5px; background: #ece9d8; }
.tb-snap .btn { height: 23px; gap: 4px; padding-left: 3px; background: #dde6f2; }
.btn-on { width: 75px; }
.btn-next { margin-left: -5px; }
.grip-m { margin: 0 -1px 0 2px; }
.it-cross { margin: 0 -2px 0 -1px; gap: 4px; }
.tb-snap .btn-pt { width: 51px; }
.btn-mid { margin-left: -5px; }
.chev-s { margin-left: 41px; margin-right: 3px; }
.grip-n { margin-right: -5px; }
.tb-snap .c-offset { width: 47px; height: 20px; padding-left: 3px; font-size: 12px; white-space: nowrap; }
.c-offset .dd { right: -9px; }
.sep.s-n1 { height: 16px; margin: 0 -3px 0 11px; }
.sep.s-n2 { height: 16px; margin: 0 -2px 0 -1px; }
.lab { color: #8a8a80; font: 10px "Liberation Mono", monospace; flex: none; width: 12px; }
.lab.mm { margin-left: -4px; }
.lab-y { margin-left: 2px; }
.lab.deg { margin-left: -1px; font-size: 12px; }
.spin { width: 58px; height: 20px; border: 1px solid #a8a89a; display: flex; align-items: center; justify-content: flex-end; flex: none; color: #999; font: 12px "Liberation Mono", monospace; margin-left: -3px; }
.spin-v { margin-right: 8px; }
.spin-a { width: 14px; display: flex; flex-direction: column; gap: 5px; align-items: center; }
.up { border: 3px solid transparent; border-bottom: 3px solid #888; border-top: 0; }
.dn { border: 3px solid transparent; border-top: 3px solid #888; border-bottom: 0; }
.spin-w { width: 67px; margin-left: -1px; }
.check { width: 11px; height: 11px; border: 1px solid #9a9a8c; background: #f2f1e8; flex: none; }
.rot { margin-left: 4px; flex: none; }

.bottom { flex: 1; min-height: 0; display: flex; margin-top: 4px; }
.gutter { width: 13px; flex: none; display: flex; flex-direction: column; align-items: center; padding-left: 0; }
.redx { width: 9px; height: 9px; background: #d83020; border-radius: 2px; display: flex; align-items: center; justify-content: center; margin-top: 0; flex: none; }
.gutter-grip { width: 2px; flex: 1; margin-top: 5px; background: repeating-linear-gradient(#bdb9a5 0 2px, transparent 2px 4px); }
.grid-area { flex: 1; min-width: 0; display: flex; flex-direction: column; }
.tb-nav { height: 24px; padding-left: 6px; gap: 8px; background: #f3f2ea; }
.tb-nav .dd { margin-left: 3px; }
.nv { width: 10px; height: 12px; fill: #2f6fd0; margin-right: 5px; flex: none; }
.nv-off { fill: #b5b8c0; }
.s-nv { margin: 0 -2px 0 -1px; }
.plain { flex: none; white-space: nowrap; }
.p-close { margin-left: -3px; }
.s-close { margin: 0; }
.total .mono { font-size: 11px; }

.grid-wrap { flex: 1; min-height: 0; display: flex; overflow: hidden; border-top: 1px solid #999; }
.grid { width: 787px; table-layout: fixed; border-collapse: collapse; flex: none; align-self: flex-start; }
.c0 { width: 33px; } .c1 { width: 73px; } .c2 { width: 33px; } .c3 { width: 211px; } .c4 { width: 166px; } .c5 { width: 156px; } .c6 { width: 61px; } .c7 { width: 38px; } .c8 { width: 16px; }
.grid th { height: 20px; font-weight: 400; background: linear-gradient(#fbfaf5, #ebe8da); border-right: 1px solid #c5c3b5; border-bottom: 1px solid #aaa; padding: 0; overflow: hidden; white-space: nowrap; }
.grid th.hot { background: linear-gradient(#fbd89a, #f3bc6a); color: #8a0a14; }
.grid th.cut { text-align: left; padding-left: 1px; }
.grid td { border: 1px solid #b5b5b5; background: #fff; padding: 0 2px; overflow: hidden; vertical-align: middle; }
.grid .g td { background: #c8fdd2; }
.grid td.no { background: #f3f2ea; text-align: center; font: 11px "Liberation Mono", monospace; }
.grid td.cur { background: #fdc97e; color: #8a0a14; }
.grid td.bl { border-left: 1px solid #000; }
.grid td.focus { background: #e0e8f8; border: 1px dotted #000; }
.r1 td { height: 28px; } .r2 td { height: 30px; } .r3 td { height: 33px; } .r4 td { height: 29px; } .r5 td { height: 29px; }
.tight { line-height: 12px; font-size: 12px; }
.f2 { line-height: 12px; }
.shp { margin: 0 26px 4px 24px; border-bottom: 2px solid #000; text-align: center; color: #c01828; font: 11px/12px "Liberation Mono", monospace; }
.ushp { display: flex; align-items: center; justify-content: center; gap: 3px; margin: -2px 0 0 -2px; }
.u-side { flex: none; }
.u { width: 120px; height: 14px; border: 2px solid #000; border-top: 0; text-align: center; color: #c01828; font: 11px/12px "Liberation Mono", monospace; }
.vscroll { width: 17px; margin-left: 1px; display: flex; flex-direction: column; background: #f3f2ea; flex: none; }
.sb-btn { height: 17px; background: #cfe0f8; border: 1px solid #9ebde8; display: flex; align-items: center; justify-content: center; flex: none; }
.sb-thumb { height: 33px; margin-top: 1px; background: #c5d8f6; border: 1px solid #9ebde8; border-radius: 2px; display: flex; align-items: center; justify-content: center; flex: none; }
.sb-thumb i { width: 7px; height: 7px; background: repeating-linear-gradient(#7f9fd0 0 1px, transparent 1px 2px); }
.sb-track { flex: 1; min-height: 0; background: #f6f5ee; }

/* Browser window */
.web { width: 325px; height: 811px; flex: none; background: #fff; display: flex; flex-direction: column; overflow: hidden; border-left: 2px solid #0a2a90; border-top: 2px solid #222; }
.w-menu { height: 29px; flex: none; background: #f5f5f5; display: flex; align-items: flex-start; color: #555; padding: 5px 0 0 183px; gap: 17px; font-size: 12px; }
.w-gt { font-size: 20px; color: #888; margin: -5px -10px 0 0; width: 10px; }
.w-addr { height: 27px; flex: none; background: #fff; border-top: 1px solid #bbb; border-bottom: 1px solid #ccc; display: flex; align-items: center; position: relative; overflow: hidden; }
.url { font: 16px "Liberation Sans", sans-serif; color: #a8a8a8; white-space: nowrap; margin-left: -1px; }
.url b { color: #333; font-weight: 400; }
.w-ok { width: 14px; height: 14px; margin-left: auto; margin-right: 2px; }
.w-fav { height: 37px; flex: none; background: #f5f5f5; display: flex; align-items: center; color: #444; white-space: nowrap; font-size: 12px; border-bottom: 1px solid #ddd; }
.f-first { margin-left: -3px; }
.f-i { display: inline-flex; gap: 3px; align-items: center; flex: none; }
.f-soft { margin-left: 9px; }
.f-i + .f-i { margin-left: 10px; }
.f-more { font: 17px "Liberation Sans", sans-serif; color: #888; margin: -3px 0 0 11px; }
.f-grip { width: 3px; height: 13px; margin-left: 33px; background: repeating-linear-gradient(#bbb 0 3px, transparent 3px 5px); flex: none; }
.f-ext { margin-left: 14px; }
.dd-g { border-top-color: #777; margin-left: 10px; border-width: 4px; border-top-width: 4px; border-bottom: 0; }
.f-ad { margin-left: 10px; border: 1px solid #e0a090; color: #e04030; padding: 2px 1px; font: 11px "Liberation Sans", sans-serif; width: 16px; overflow: hidden; }
.w-tabs { height: 27px; flex: none; background: #f5f5f5; display: flex; align-items: flex-end; border-bottom: 1px solid #bbb; color: #555; font-size: 12px; white-space: nowrap; }
.w-tab { height: 26px; display: flex; align-items: center; width: 150px; flex: none; }
.w-x { width: 9px; height: 9px; margin-left: 14px; flex: none; }
.w-active { height: 27px; margin-bottom: -1px; background: #fff; border: 1px solid #bbb; border-bottom: 0; border-radius: 3px 3px 0 0; width: 200px; padding-left: 11px; gap: 4px; color: #111; }
.w-page { flex: 1; min-height: 0; position: relative; display: flex; flex-direction: column; }
.logo { height: 158px; flex: none; display: flex; align-items: flex-start; padding-left: 3px; position: relative; }
.logo-bar { width: 2px; height: 32px; margin-top: 8px; background: linear-gradient(#fff, #5d7fa8, #fff); margin-right: 5px; flex: none; }
.logo-w { display: inline-flex; align-items: baseline; width: 107px; margin-top: 14px; transform: scaleX(1.24); transform-origin: left top; flex: none; }
.logo-g { font: italic 900 20px/1 "Liberation Sans", sans-serif; color: #6aa82a; }
.logo-o { font: italic 900 24px/1 "Liberation Sans", sans-serif; color: #0a70c8; }
.logo-cn { font: bold 17px/1 "Noto Sans CJK SC", sans-serif; color: #0a70c8; margin: 14px 0 0 6px; flex: none; }
.search { height: 34px; flex: none; border-top: 1px solid #1e4f9c; border-bottom: 1px solid #1e4f9c; display: flex; justify-content: flex-end; }
.search-btn { width: 50px; background: #4587d4; color: #e8f0fa; display: flex; align-items: center; gap: 6px; padding-left: 12px; font-size: 14px; white-space: nowrap; overflow: hidden; }
.rule { height: 1px; border: 0; background: #777; margin: 10px 0 0; flex: none; }
.cols { flex: 1; min-height: 0; display: flex; padding-top: 12px; }
.side { width: 40px; flex: none; display: flex; flex-direction: column; gap: 10px; }
.s-gray { height: 50px; background: #e6e6e6; }
.s-bl { height: 30px; background: #c4dcfb; }
.qa { margin-left: 10px; flex: 1; min-width: 0; display: flex; flex-direction: column; }
.qa-tabs { height: 29px; flex: none; background: #e0eefb; display: flex; align-items: flex-end; gap: 16px; padding-left: 9px; font-size: 14px; white-space: nowrap; }
.qa-tabs a { text-decoration: underline; color: #222; margin-bottom: 7px; line-height: 1; }
.qa-tabs .q1 { margin-left: 3px; }
.qa-on { width: 94px; height: 24px; background: #fff; border: 1px solid #a8c8e8; border-bottom: 0; font-weight: 700; display: flex; align-items: center; justify-content: center; border-radius: 3px 3px 0 0; padding-bottom: 3px; }
.qa-th { height: 48px; flex: none; display: flex; align-items: center; padding: 8px 0 0 23px; border-bottom: 1px dotted #bbb; }
.q-row { height: 34px; flex: none; display: flex; align-items: center; padding-left: 25px; border-bottom: 1px dotted #bbb; white-space: nowrap; font-size: 14px; overflow: hidden; }
.q-row a { color: #1a1ac0; margin-left: 6px; }
.qm { font: bold 18px/1 "Liberation Sans", sans-serif; color: #e8b818; width: 14px; text-shadow: 0 0 1px #a08000; margin-top: -6px; flex: none; }
.coin { width: 10px; height: 9px; background: #e8c030; border-radius: 3px; margin-left: 9px; flex: none; }
.zero { color: #d04030; margin-left: 7px; font-size: 12px; }
.cat { color: #333; margin-left: 7px; font-size: 12px; }
.q-last { border-bottom: 0; height: 32px; }
.q-tag { height: 16px; flex: none; padding: 0 0 8px 24px; display: flex; align-items: center; }
.detail { flex: 1; min-height: 0; border-top: 1px solid #ccc; border-left: 1px solid #ccc; margin-left: 19px; padding-left: 19px; display: flex; flex-direction: column; overflow: hidden; }
.asker { margin-top: 11px; color: #999; white-space: nowrap; font-size: 12px; }
.asker b { font-weight: 400; color: #2a3f8a; }
.bar { margin: 0 12px; }
.body-txt { margin-top: 15px; font-size: 14px; white-space: nowrap; color: #111; }
.shot { margin: 44px 0 0 9px; flex: none; display: block; }
.sh-t { font: 6px "Noto Sans CJK SC", sans-serif; fill: #444; }
.sh-w { font: 7px "Liberation Sans", sans-serif; fill: #bbb; }
.sh-k { font: 5px "Noto Sans CJK SC", sans-serif; fill: #333; }
.sh-g { font: 5px "Noto Sans CJK SC", sans-serif; fill: #999; }
.sh-p { font: 5px "Noto Sans CJK SC", sans-serif; fill: #c01828; }
.sh-r { font: 10px "Noto Sans CJK SC", sans-serif; fill: #e04040; }
.alpha { font: 9px "Liberation Serif", serif; fill: #2a4a80; }
.reply-box { margin-top: 20px; height: 30px; background: #eaf3fd; border: 1px solid #b0cbe5; flex: none; }

.arrows { position: absolute; left: 0; top: 0; pointer-events: none; }
```
